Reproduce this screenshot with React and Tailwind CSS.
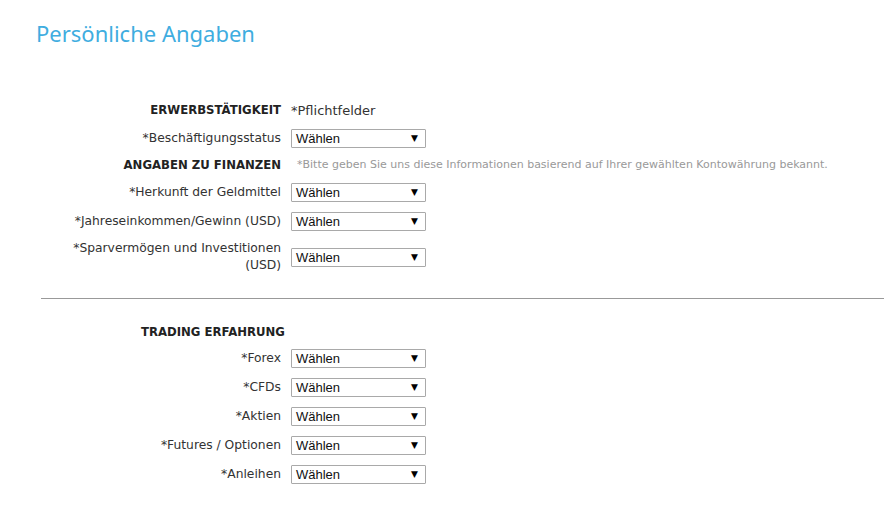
import React from "react";

const Select = () => (
  <div className="relative w-[135px] h-[19px] border border-[#a9a9a9] rounded-[1px] bg-white flex items-center pl-[4px] shrink-0">
    <span className="text-[13px] text-[#111] leading-none" style={{ fontFamily: '"Liberation Sans", Arial, sans-serif' }}>Wählen</span>
    <span className="absolute right-[7px] top-[4px] text-[9px] leading-none text-black">▼</span>
  </div>
);

const Row = ({ label, h = "h-[29px]" }) => (
  <div className={`flex items-center ${h}`}>
    <div className="w-[220px] text-right text-[12.3px] leading-[17px] text-[#333]">{label}</div>
    <div className="ml-[10px]">
      <Select />
    </div>
  </div>
);

export default function App() {
  return (
    <div className="w-[884px] h-[515px] bg-white overflow-hidden" style={{ fontFamily: '"DejaVu Sans", Verdana, sans-serif' }}>
      <div className="pl-[36px] pt-[18px] h-[98px]">
        <h1 className="text-[22px] leading-[30px] text-[#3fade0]" style={{ fontFamily: '"Noto Sans", "Open Sans", sans-serif' }}>Persönliche Angaben</h1>
      </div>
      <div className="pl-[61px]">
        <div className="flex items-center h-[26px]">
          <div className="w-[220px] text-right text-[11.7px] font-bold text-[#222] whitespace-nowrap">ERWERBSTÄTIGKEIT</div>
          <div className="ml-[10px] text-[13px] text-[#333]">*Pflichtfelder</div>
        </div>
        <Row label="*Beschäftigungsstatus" />
        <div className="flex items-center h-[25px]">
          <div className="w-[220px] text-right text-[11.7px] font-bold text-[#222] whitespace-nowrap">ANGABEN ZU FINANZEN</div>
          <div className="ml-[16px] text-[11px] text-[#999] whitespace-nowrap">*Bitte geben Sie uns diese Informationen basierend auf Ihrer gewählten Kontowährung bekannt.</div>
        </div>
        <Row label="*Herkunft der Geldmittel" />
        <Row label="*Jahreseinkommen/Gewinn (USD)" />
        <Row label="*Sparvermögen und Investitionen (USD)" h="h-[42px]" />
      </div>
      <div className="ml-[41px] mt-[20px] border-t border-[#999]" />
      <div className="pl-[61px] pt-[22px]">
        <div className="flex items-center h-[23px]">
          <div className="pl-[80px] text-[11.7px] font-bold text-[#222] whitespace-nowrap">TRADING ERFAHRUNG</div>
        </div>
        <Row label="*Forex" />
        <Row label="*CFDs" />
        <Row label="*Aktien" />
        <Row label="*Futures / Optionen" />
        <Row label="*Anleihen" />
      </div>
    </div>
  );
}
